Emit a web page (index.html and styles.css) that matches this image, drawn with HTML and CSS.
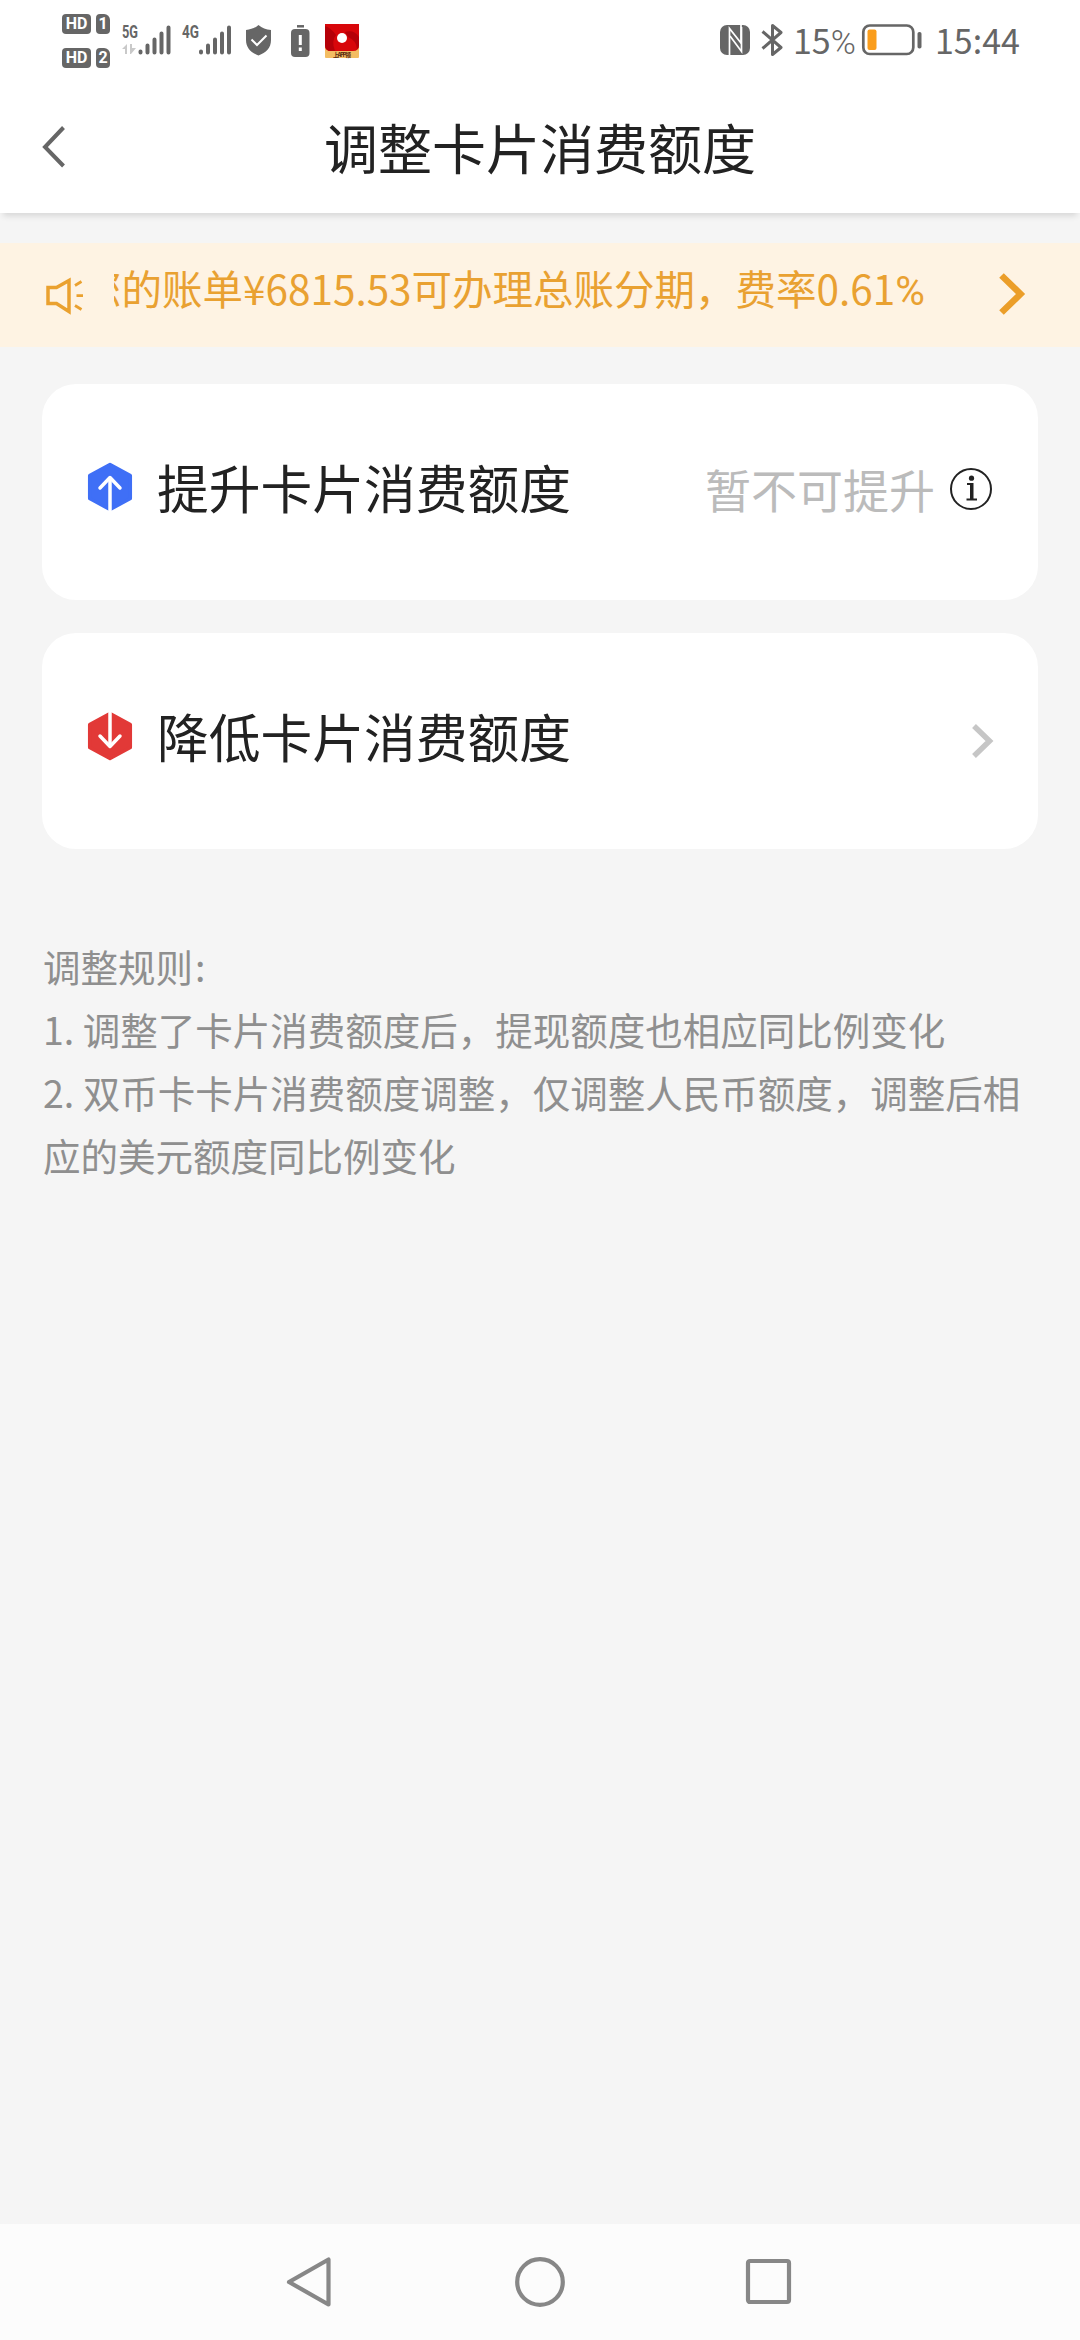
FILE: index.html
```html
<!DOCTYPE html>
<html lang="zh-CN">
<head>
<meta charset="utf-8">
<title>调整卡片消费额度</title>
<link rel="stylesheet" href="styles.css">
</head>
<body>
<div class="screen">
  <div class="status">
    <div class="status-left">
      <div class="sims">
        <div class="sim"><span class="hd">HD</span><span class="slot">1</span></div>
        <div class="sim"><span class="hd">HD</span><span class="slot">2</span></div>
      </div>
      <svg class="signal" width="50" height="32" viewBox="0 0 50 32">
        <text class="net" x="0" y="14" textLength="16" lengthAdjust="spacingAndGlyphs">5G</text>
        <path d="M0 25l5-5v10H3v-5zM8 20h2v4h4l-5 6H8z" fill="#c9c9c9"/>
        <g stroke="#666" stroke-width="4" stroke-linecap="round"><path d="M18.500 28.500v-1M25.500 28.500v-7M32.500 28.500v-13M39.500 28.500v-19M46.500 28.500v-25"/></g>
      </svg>
      <svg class="signal second" width="50" height="32" viewBox="0 0 50 32">
        <text class="net" x="0" y="14" textLength="17" lengthAdjust="spacingAndGlyphs">4G</text>
        <g stroke="#666" stroke-width="4" stroke-linecap="round"><path d="M19 28.500v-1M26 28.500v-7M33 28.500v-13M40 28.500v-19M47 28.500v-25"/></g>
      </svg>
      <svg class="shield" width="27" height="31" viewBox="0 0 27 31">
        <path d="M13.500 0C17 3 21 4.500 26 5v10c0 8-5 12.500-12.500 15.500C6 27.500 1 23 1 15V5c5-.5 9-2 12.500-5z" fill="#666"/>
        <path d="M6.500 14.500l5.500 5.500 9.500-9.500" fill="none" stroke="#fff" stroke-width="2"/>
      </svg>
      <svg class="alert" width="19" height="32" viewBox="0 0 19 32">
        <path d="M6 1.300h7" stroke="#666" stroke-width="2.500"/>
        <rect x="0" y="4" width="18.500" height="28" rx="4" fill="#666"/>
        <path d="M9.300 10v10M9.300 22.500v3.500" stroke="#fff" stroke-width="3"/>
      </svg>
      <svg class="app" width="34" height="34" viewBox="0 0 34 34">
        <rect width="34" height="34" rx="1" fill="#f3bd63"/>
        <path d="M0 0h34v21q0 6-6 6H6q-6 0-6-6z" fill="#d8060a"/>
        <path d="M0 2Q6 4 11 11q-5 6-1 16H6q-6 0-6-6zM20 8q9-3 14 5v8q0 3-2 4-1-9-9-12z" fill="#b50008"/>
        <circle cx="17" cy="14" r="5" fill="#fff"/>
        <text x="8" y="32.500" font-size="6" font-weight="700" fill="#5b2a10" textLength="18">上APP领</text>
      </svg>
    </div>
    <div class="status-right">
      <svg class="nfc" width="30" height="30" viewBox="0 0 30 30">
        <rect width="30" height="30" rx="7" fill="#666"/>
        <path d="M9.500 30V3.500L21 18V0" fill="none" stroke="#fff" stroke-width="1.700"/>
        <path d="M10 11l11.500 15.500V2" fill="none" stroke="#fff" stroke-width="1.700"/>
      </svg>
      <svg class="bt" width="22" height="34" viewBox="0 0 22 34">
        <path d="M1.500 8.500L20 24.500 11.500 31.500V2.500L20 9.500 1.500 25.500" fill="none" stroke="#666" stroke-width="3" stroke-linejoin="round"/>
      </svg>
      <span class="pct">15<span class="percent">%</span></span>
      <svg class="battery" width="60" height="32" viewBox="0 0 60 32">
        <rect x="1.300" y="1.500" width="50" height="28.500" rx="6.500" fill="none" stroke="#666" stroke-width="2.700"/>
        <rect x="5.500" y="5.500" width="9" height="20.500" rx="2" fill="#fa9d1c"/>
        <rect x="55.500" y="8" width="4" height="16.500" rx="1.800" fill="#666"/>
      </svg>
      <span class="clock">15:44</span>
    </div>
  </div>

  <header class="header">
    <svg class="back" width="24" height="42" viewBox="0 0 24 42"><path d="M21.500 1.500L3 21l18.500 19" fill="none" stroke="#666" stroke-width="4"/></svg>
    <h1 class="title">调整卡片消费额度</h1>
  </header>

  <div class="notice">
    <svg class="speaker" width="38" height="38" viewBox="0 0 38 38" fill="none" stroke="#eaa12f" stroke-width="3.500">
      <path d="M2 10.500h8.500L23 3.500v31l-12.500-8H2z"/>
      <path d="M29 8.500l6.500-4M30.500 18.700h6.500M29 28.500l6.500 4" stroke-width="2.800"/>
    </svg>
    <div class="marquee"><span class="marquee-text">您的账单¥6815.53可办理总账分期，费率0.61<span class="percent">%</span></span></div>
    <svg class="notice-arrow" width="28" height="44" viewBox="0 0 28 44"><path d="M3.500 3.500L22.500 22 3.500 40.500" fill="none" stroke="#eb9e29" stroke-width="6.500"/></svg>
  </div>

  <main class="cards">
    <div class="card">
      <svg class="hex" width="46" height="50" viewBox="0 0 46 50">
        <path d="M23 2.500L43.300 13.500v23L23 47.500 2.700 36.500v-23z" fill="#3f6ff6" stroke="#3f6ff6" stroke-width="3.500" stroke-linejoin="round"/>
        <path d="M23 50V16" stroke="#fff" stroke-width="3.500"/><path d="M13 26l10-10.500L33 26" fill="none" stroke="#fff" stroke-width="3.500" stroke-linecap="round" stroke-linejoin="round"/>
      </svg>
      <span class="card-title">提升卡片消费额度</span>
      <span class="state">暂不可提升</span>
      <svg class="info" width="44" height="44" viewBox="0 0 44 44">
        <circle cx="22" cy="22" r="20" fill="none" stroke="#222" stroke-width="2"/>
        <circle cx="22.500" cy="11.200" r="2.600" fill="#222"/>
        <path d="M18 16h6.500v15.500H28v2H17.500v-2H21V18h-3z" fill="#222"/>
      </svg>
    </div>
    <div class="card">
      <svg class="hex" width="46" height="50" viewBox="0 0 46 50">
        <path d="M23 2.500L43.300 13.500v23L23 47.500 2.700 36.500v-23z" fill="#e23937" stroke="#e23937" stroke-width="3.500" stroke-linejoin="round"/>
        <path d="M23 0v34" stroke="#fff" stroke-width="3.500"/><path d="M13 25l10 10.500L33 25" fill="none" stroke="#fff" stroke-width="3.500" stroke-linecap="round" stroke-linejoin="round"/>
      </svg>
      <span class="card-title">降低卡片消费额度</span>
      <svg class="go" width="24" height="34" viewBox="0 0 24 34"><path d="M3 2L18.500 17 3 32" fill="none" stroke="#c6c6c6" stroke-width="5.500"/></svg>
    </div>
  </main>

  <section class="rules">
    <p>调整规则<span class="colon">:</span></p>
    <p>1. 调整了卡片消费额度后，提现额度也相应同比例变化</p>
    <p>2. 双币卡卡片消费额度调整，仅调整人民币额度，调整后相应的美元额度同比例变化</p>
  </section>

  <nav class="navbar">
    <svg width="52" height="52" viewBox="0 0 52 52"><path d="M43.500 3.500v45L4 26z" fill="none" stroke="#878787" stroke-width="4.200" stroke-linejoin="round"/></svg>
    <svg width="52" height="52" viewBox="0 0 52 52"><circle cx="26" cy="26" r="22.800" fill="none" stroke="#878787" stroke-width="4.200"/></svg>
    <svg width="52" height="52" viewBox="0 0 52 52"><rect x="5" y="5" width="41" height="41" rx="2" fill="none" stroke="#878787" stroke-width="4.200"/></svg>
  </nav>
</div>
</body>
</html>
```
FILE: styles.css
```css
* { box-sizing: border-box; margin: 0; padding: 0; }
body {
  font-family: "Noto Sans CJK SC", sans-serif;
  background: #f5f5f5;
}
svg { display: block; flex: none; overflow: visible; }
.screen {
  width: 1080px;
  height: 2340px;
  display: flex;
  flex-direction: column;
  overflow: hidden;
}
.status {
  height: 80px;
  flex: none;
  background: #fff;
  display: flex;
  justify-content: space-between;
  padding: 0 60px 0 62px;
}
.status-left, .status-right { display: flex; align-items: flex-start; }
.sims { padding-top: 14px; display: flex; flex-direction: column; gap: 14px; }
.sim { display: flex; gap: 5px; height: 20px; }
.hd, .slot {
  background: #666;
  color: #fff;
  font: 700 16px/20px Roboto, sans-serif;
  text-align: center;
  border-radius: 4px;
}
.hd { width: 29px; }
.slot { width: 14px; border-top-right-radius: 6px; }
.signal { margin: 24px 0 0 12px; }
.signal.second { margin-left: 10px; }
.net { font: 700 18px Roboto, sans-serif; fill: #666; }
.shield { margin: 25px 0 0 13px; }
.alert { margin: 25px 0 0 19px; }
.app { margin: 24px 0 0 15px; }
.nfc { margin-top: 25px; }
.bt { margin: 23px 0 0 11px; }
.pct, .clock {
  color: #666;
  font: 400 34px/40px "Noto Sans CJK SC", sans-serif;
  margin-top: 20px;
  white-space: nowrap;
}
.percent { font-family: Roboto, sans-serif; font-weight: 300; }
.pct { margin-left: 10px; width: 66px; }
.battery { margin: 24px 0 0 3px; }
.clock { margin-left: 13px; width: 85px; }
.header {
  height: 133px;
  flex: none;
  background: #fff;
  box-shadow: 0 6px 6px -3px rgba(0, 0, 0, .12);
  display: grid;
  grid-template-columns: 42px 1fr 42px;
}
.back { margin: 46px 0 0 42px; }
.title {
  font-size: 54px;
  font-weight: 400;
  line-height: 80px;
  color: #222;
  text-align: center;
  padding-top: 27px;
}
.notice {
  height: 104px;
  flex: none;
  margin-top: 30px;
  background: #fef3e3;
  display: flex;
  padding: 0 54px 0 46px;
}
.speaker { margin-top: 34px; }
.marquee {
  width: 820px;
  margin-left: 30px;
  height: 96px;
  overflow: hidden;
  display: flex;
}
.marquee-text {
  margin-left: -33px;
  font-size: 40.5px;
  line-height: 90px;
  color: #e9a131;
  white-space: nowrap;
}
.marquee-text .percent { font-weight: 400; }
.notice-arrow { margin: 29px 0 0 auto; }
.cards {
  margin: 37px 42px 0;
  display: flex;
  flex-direction: column;
  gap: 33px;
}
.card {
  height: 216px;
  background: #fff;
  border-radius: 34px;
  display: flex;
  align-items: center;
  padding: 0 45px 6px 45px;
}
.hex { margin-bottom: 4px; }
.card-title {
  margin: 0 0 4px 24px;
  font-size: 51.75px;
  line-height: 76px;
  color: #222;
}
.state {
  margin: 0 0 2px auto;
  font-size: 46px;
  line-height: 68px;
  color: #bbb;
}
.info { margin-left: 14px; }
.go { margin: 5px -2px 0 auto; }
.rules {
  margin: 85px 43px 0;
  font-size: 37.5px;
  line-height: 63px;
  color: #8f8f8f;
}
.colon { margin-left: 2px; }
.navbar {
  height: 116px;
  flex: none;
  margin-top: auto;
  background: #fcfcfc;
  display: flex;
  justify-content: center;
  gap: 177px;
  padding-top: 32px;
}
```
